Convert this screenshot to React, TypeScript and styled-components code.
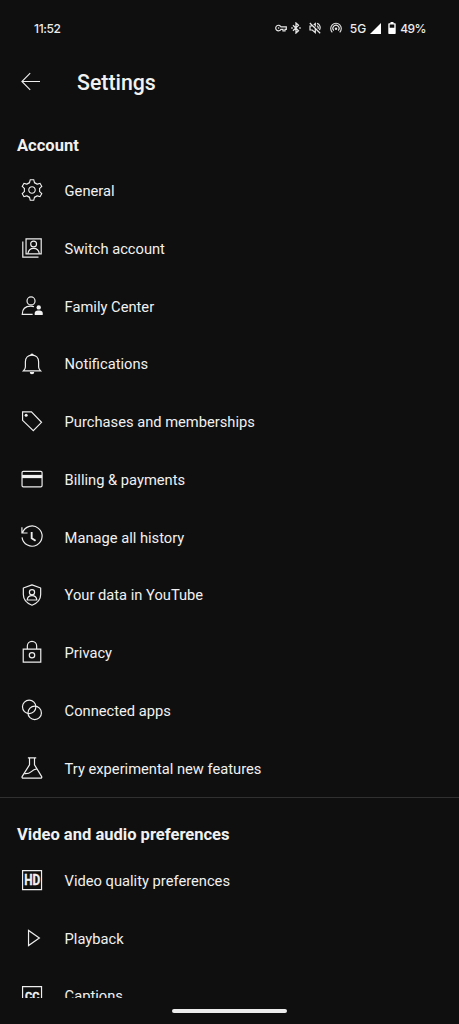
import React from 'react';
import styled, { createGlobalStyle } from 'styled-components';

const GlobalStyle = createGlobalStyle`
  * { box-sizing: border-box; }
  html, body { margin: 0; background: #0f0f0f; }
  body { overflow: hidden; }
`;

const Screen = styled.div`
  display: flex;
  flex-direction: column;
  height: 1024px;
  width: 100%;
  overflow: hidden;
  background: #0f0f0f;
  color: #f1f1f1;
  font-family: Roboto, "Noto Sans", sans-serif;
`;

const StatusBar = styled.div`
  display: flex;
  justify-content: space-between;
  align-items: center;
  flex: none;
  height: 56px;
  padding: 0 33px 0 34px;
  font: 500 12px Inter, Roboto, sans-serif;
  color: #ececec;
`;

const Clock = styled.span`
  letter-spacing: -0.35px;
`;

const StatusIcons = styled.div`
  display: flex;
  align-items: center;
`;

const StatusGlyph = styled.svg<{ $gap: number }>`
  display: block;
  margin-right: ${(p) => p.$gap}px;
`;

const StatusText = styled.span<{ $gap?: number; $tracking?: number }>`
  margin-right: ${(p) => p.$gap ?? 0}px;
  letter-spacing: ${(p) => p.$tracking ?? 0}px;
`;

const Header = styled.header`
  display: flex;
  align-items: center;
  flex: none;
  height: 52px;
  padding-left: 20px;
  gap: 36px;
`;

const BackButton = styled.button`
  display: block;
  padding: 0;
  border: 0;
  background: none;
  color: inherit;
  height: 20px;
  width: 21px;
  margin-top: -2px;
`;

const Title = styled.h1`
  margin: 0;
  padding-top: 2px;
  font-size: 21.3px;
  font-weight: 500;
  line-height: 28px;
`;

const Content = styled.main`
  flex: none;
  height: 890px;
  overflow: hidden;
`;

const SectionTitle = styled.h2<{ $height: number; $top: number }>`
  margin: 0;
  height: ${(p) => p.$height}px;
  padding: ${(p) => p.$top}px 0 0 17px;
  font-size: 16.55px;
  font-weight: 700;
  line-height: 22px;
`;

const Row = styled.div`
  display: flex;
  align-items: center;
  height: 57.75px;
  padding-left: 19.3px;
  gap: 19.3px;
`;

const Label = styled.span`
  font-size: 14.7px;
  line-height: 20px;
  padding-top: 1.4px;
  white-space: nowrap;
`;

const Icon = styled.svg`
  display: block;
  flex: none;
  width: 26px;
  height: 26px;
  fill: none;
  stroke: #eee;
  stroke-width: 1.1;
`;

const Badge = styled.text<{ $size: number }>`
  font: 700 ${(p) => p.$size}px Roboto, sans-serif;
  fill: #f1f1f1;
  stroke: #f1f1f1;
  stroke-width: 0.3;
`;

const Divider = styled.hr`
  height: 1px;
  margin: 0;
  border: 0;
  background: #303030;
`;

const BottomBar = styled.footer`
  display: flex;
  justify-content: center;
  padding-top: 11px;
`;

const HomeHandle = styled.div`
  width: 115px;
  height: 4px;
  border-radius: 2px;
  background: #ececec;
`;

const solid = { fill: '#f1f1f1', stroke: 'none' };

const account: { label: string; icon: React.ReactNode }[] = [
  {
    label: 'General',
    icon: (
      <path
        {...solid}
        d="M12 9.5c1.38 0 2.5 1.12 2.5 2.5s-1.12 2.5-2.5 2.5-2.5-1.12-2.5-2.5 1.12-2.5 2.5-2.5m0-1c-1.93 0-3.5 1.57-3.5 3.5s1.57 3.5 3.5 3.5 3.5-1.57 3.5-3.5-1.57-3.5-3.5-3.5zM13.22 3l.55 2.2.13.51.5.18c.61.23 1.19.56 1.72.98l.4.32.5-.14 2.17-.62 1.22 2.11-1.63 1.59-.37.36.08.51c.05.32.08.64.08.98s-.03.66-.08.98l-.08.51.37.36 1.63 1.59-1.22 2.11-2.17-.62-.5-.14-.4.32c-.53.43-1.11.76-1.72.98l-.5.18-.13.51-.55 2.24h-2.44l-.55-2.2-.13-.51-.5-.18c-.6-.23-1.18-.56-1.72-.99l-.4-.32-.5.14-2.17.62-1.21-2.12 1.63-1.59.37-.36-.08-.51c-.05-.32-.08-.65-.08-.98s.03-.66.08-.98l.08-.51-.37-.36L3.6 8.56l1.22-2.11 2.17.62.5.14.4-.32c.53-.44 1.11-.77 1.72-.99l.5-.18.13-.51.54-2.21h2.44M14 2h-4l-.74 2.96c-.73.27-1.4.66-2 1.14l-2.92-.83-2 3.46 2.19 2.13c-.06.37-.09.75-.09 1.14s.03.77.09 1.14l-2.19 2.13 2 3.46 2.92-.83c.6.48 1.27.87 2 1.14L10 22h4l.74-2.96c.73-.27 1.4-.66 2-1.14l2.92.83 2-3.46-2.19-2.13c.06-.37.09-.75.09-1.14s-.03-.77-.09-1.14l2.19-2.13-2-3.46-2.92.83c-.6-.48-1.27-.87-2-1.14L14 2z"
      />
    ),
  },
  {
    label: 'Switch account',
    icon: (
      <>
        <path d="M6.5 3.5h14v14h-14zM3.5 6v14.5H18" />
        <circle cx="13.5" cy="8.3" r="2.7" />
        <path d="M8.2 17.3c.5-3.2 2.2-4.9 5.3-4.9s4.8 1.7 5.3 4.9" />
      </>
    ),
  },
  {
    label: 'Family Center',
    icon: (
      <>
        <circle cx="11.1" cy="7.3" r="3.7" />
        <path d="M12.6 19.7H3c0-4.9 2.7-7.5 7.8-7.5 1.2 0 2.2.1 3 .5" />
        <circle cx="18.2" cy="13.3" r="2" {...solid} />
        <path d="M14.5 20.2v-1.4c0-1.7 1.2-2.6 3-2.6h1.4c1.8 0 3 .9 3 2.6v1.4z" {...solid} />
      </>
    ),
  },
  {
    label: 'Notifications',
    icon: (
      <>
        <path d="M4 18.4c1.3-1.3 1.9-2.2 1.9-3.7V10c0-3.7 2.4-6.2 6.1-6.2s6.1 2.5 6.1 6.2v4.7c0 1.5.6 2.4 1.9 3.7z" />
        <path d="M10.4 3.9a1.6 1.6 0 0 1 3.2 0zM9.9 19.3h4.2a2.1 2.1 0 0 1-4.2 0z" {...solid} />
      </>
    ),
  },
  {
    label: 'Purchases and memberships',
    icon: (
      <>
        <path d="M3.3 3.5h8.2l9.3 9.7-7.6 7.8-9.9-9.6z" />
        <circle cx="6.6" cy="6.7" r="1.4" {...solid} />
      </>
    ),
  },
  {
    label: 'Billing & payments',
    icon: (
      <>
        <rect x="2.8" y="4.9" width="18.5" height="14.3" rx="1.2" />
        <path d="M2.8 8.2h18.5v3H2.8z" {...solid} />
      </>
    ),
  },
  {
    label: 'Manage all history',
    icon: (
      <>
        <path d="M3.2 8.2A9.3 9.3 0 1 1 2.8 12.4M2.7 3v5.3h5.2" />
        <path d="M11.7 7.3v5.8l3.6 2.4" strokeWidth="1.7" />
      </>
    ),
  },
  {
    label: 'Your data in YouTube',
    icon: (
      <>
        <path d="M12 2.6l8 2.9v6c0 4.7-2.9 7.9-8 9.9-5.1-2-8-5.2-8-9.9v-6z" strokeLinejoin="round" />
        <circle cx="12" cy="9.4" r="2.4" />
        <path d="M7.5 16.6c.3-2.6 1.7-4 4.5-4s4.2 1.4 4.5 4z" />
      </>
    ),
  },
  {
    label: 'Privacy',
    icon: (
      <>
        <path d="M3.9 9.3h16.2v12H3.9zM7.7 9V6.5a4.3 4.3 0 0 1 8.6 0V9" />
        <circle cx="12" cy="15" r="2.5" />
      </>
    ),
  },
  {
    label: 'Connected apps',
    icon: (
      <>
        <circle cx="9.4" cy="9.1" r="6.2" />
        <circle cx="14.5" cy="14.7" r="6.2" />
      </>
    ),
  },
  {
    label: 'Try experimental new features',
    icon: (
      <>
        <path d="M8.2 2.7h7.7M9.7 2.7V9L3 19.7c-.5.9-.1 1.7.9 1.7h16c1 0 1.4-.8.9-1.7L14.3 9V2.7" />
        <path d="M4.9 17.2c3.1.3 4.5-.1 6.5-1.9 1.6-1.5 3-2.2 5.1-2.5" />
      </>
    ),
  },
];

const video: { label: string; icon: React.ReactNode }[] = [
  {
    label: 'Video quality preferences',
    icon: (
      <>
        <path d="M3.3 3.3h17.5v17.5H3.3z" />
        <Badge $size={13.8} x="4.8" y="17" textLength="14.8" lengthAdjust="spacingAndGlyphs">HD</Badge>
      </>
    ),
  },
  { label: 'Playback', icon: <path d="M8.8 5v14l10-7z" /> },
  {
    label: 'Captions',
    icon: (
      <>
        <path d="M3.3 3.3h17.5v17.5H3.3z" />
        <Badge $size={10.3} x="5.6" y="15.8" textLength="13.2" lengthAdjust="spacingAndGlyphs">CC</Badge>
      </>
    ),
  },
];

const Rows = ({ items }: { items: typeof account }) => (
  <>
    {items.map((item) => (
      <Row key={item.label}>
        <Icon viewBox="0 0 24 24">{item.icon}</Icon>
        <Label>{item.label}</Label>
      </Row>
    ))}
  </>
);

export default function App() {
  return (
    <Screen>
      <GlobalStyle />
      <StatusBar>
        <Clock>11:52</Clock>
        <StatusIcons>
          <StatusGlyph $gap={4} width="12" height="12" viewBox="0 0 12 12" fill="none" stroke="#e6e6e6" strokeWidth="1.2">
            <path d="M6 4.8A2.8 2.8 0 1 0 6 7.3h2V9h2V7.3h1.3V4.8z" />
            <circle cx="3.6" cy="6.05" r=".8" fill="#e6e6e6" stroke="none" />
          </StatusGlyph>
          <StatusGlyph $gap={8} width="10" height="12" viewBox="0 0 10 12" fill="none" stroke="#e6e6e6" strokeWidth="1.3">
            <path d="M2 3.2l5.5 5.5L5 11V1l2.5 2.3L2 8.8M.3 6h1.4M8.3 6h1.4" />
          </StatusGlyph>
          <StatusGlyph $gap={9} width="12" height="12" viewBox="0 0 12 12" fill="none" stroke="#e6e6e6" strokeWidth="1.2">
            <path d="M.8 1l10.4 10.2M3.5 4H1v4h2.3l3 2.6V7M4.7 2.9l1.6-1.4v3M8 3.8c1 .5 1.5 1.7 1 3M8 1.3c2.7.8 4 3.9 2.5 6.700" />
          </StatusGlyph>
          <StatusGlyph $gap={8} width="12" height="12" viewBox="0 0 12 12" fill="none" stroke="#e6e6e6" strokeWidth="1.1">
            <path d="M2.3 10.3a5.3 5.3 0 1 1 7.4 0M3.8 8.6a3.1 3.1 0 1 1 4.4 0" />
            <circle cx="6" cy="6.7" r="1.2" fill="#e6e6e6" stroke="none" />
          </StatusGlyph>
          <StatusText $gap={4}>5G</StatusText>
          <StatusGlyph $gap={7} width="11" height="11" viewBox="0 0 11 11" fill="#fff">
            <path d="M11 0v11H0z" />
          </StatusGlyph>
          <StatusGlyph $gap={4} width="8" height="12" viewBox="0 0 8 12" fill="#fff">
            <path fillRule="evenodd" d="M2.5 0h3v1.2H7q.7 0 .7.7v9.4q0 .7-.7.7H1q-.7 0-.7-.7V1.9q0-.7.7-.7h1.5zM1.7 2.6v3.2h4.6V2.6z" />
          </StatusGlyph>
          <StatusText $tracking={-0.5}>49%</StatusText>
        </StatusIcons>
      </StatusBar>
      <Header>
        <BackButton aria-label="Back">
          <svg width="21" height="20" viewBox="0 0 21 20" fill="none" stroke="#eee" strokeWidth="1.1">
            <path d="M20 10.5H2M10.2 2.2L1.9 10.5l8.3 8.3" />
          </svg>
        </BackButton>
        <Title>Settings</Title>
      </Header>
      <Content>
        <SectionTitle $height={53.6} $top={26.5}>Account</SectionTitle>
        <Rows items={account} />
        <Divider />
        <SectionTitle $height={53.5} $top={26}>Video and audio preferences</SectionTitle>
        <Rows items={video} />
      </Content>
      <BottomBar>
        <HomeHandle />
      </BottomBar>
    </Screen>
  );
}
